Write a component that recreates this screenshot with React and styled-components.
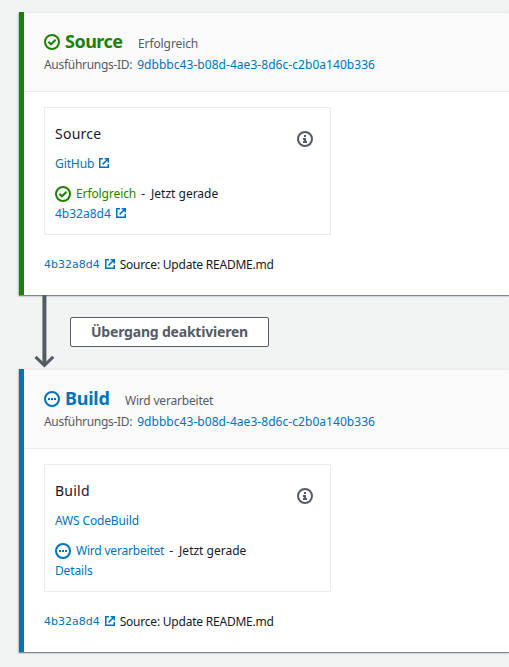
import React from 'react';
import styled, { createGlobalStyle } from 'styled-components';

const GlobalStyle = createGlobalStyle`
  * { box-sizing: border-box; }
  body {
    margin: 0;
    background: #f2f3f3;
    color: #16191f;
    font: 12px/20px "Noto Sans", "Open Sans", sans-serif;
    overflow: hidden;
  }
`;

const Page = styled.main`
  display: flex;
  flex-direction: column;
  height: 667px;
  padding: 12px 0 0 19px;
`;

const StagePanel = styled.section`
  height: 283px;
  flex: none;
  border-left: 5px solid ${(p) => p.$color};
  background: #fff;
  box-shadow: 0 1px 1px 0 rgba(0, 28, 36, 0.4), -1px 1px 2px 0 rgba(0, 28, 36, 0.2);
`;

const StageHeader = styled.header`
  height: 80px;
  padding: 17px 20px 0;
  border-top: 1px solid #eaeded;
  border-bottom: 1px solid #eaeded;
  background: #fafafa;
  color: #545b64;
`;

const TitleRow = styled.div`
  display: flex;
  align-items: baseline;
  height: 24px;
  line-height: 22px;
`;

const Title = styled.h2`
  margin: 0 0 0 5px;
  width: ${(p) => p.$width}px;
  font-size: 18px;
  font-weight: 700;
  line-height: 22px;
  letter-spacing: ${(p) => p.$spacing}px;
  color: ${(p) => p.$color};
`;

const Label = styled.span`
  letter-spacing: ${(p) => p.$spacing || 0}px;
  color: ${(p) => p.$color || 'inherit'};
  white-space: nowrap;
`;

const Separator = styled.span`
  margin-right: 1px;
`;

const Link = styled.a`
  color: #0073bb;
  letter-spacing: ${(p) => p.$spacing || 0}px;
  white-space: nowrap;
`;

const Line = styled.div`
  display: flex;
  align-items: center;
  height: 20px;
  gap: ${(p) => p.$gap || 0}px;
  margin-top: ${(p) => p.$top || 0}px;
`;

const StageBody = styled.div`
  padding: 15px 20px 0;
`;

const ActionCard = styled.article`
  width: 287px;
  height: 128px;
  padding: 16px 10px 0;
  border: 1px solid #eaeded;
`;

const CardHeader = styled.div`
  display: flex;
  justify-content: space-between;
  height: 20px;
  padding-right: 7px;
`;

const CardTitle = styled.h3`
  margin: 0;
  font-size: 14px;
  font-weight: 400;
  line-height: 20px;
  letter-spacing: 0.25px;
`;

const InfoSvg = styled.svg`
  margin-top: 7px;
  flex: none;
`;

const StatusSvg = styled.svg`
  flex: none;
  align-self: center;
`;

const ExternalSvg = styled.svg`
  flex: none;
  margin-bottom: 3px;
`;

const CommitHash = styled(Link)`
  font-family: "DejaVu Sans", sans-serif;
  font-size: 11px;
`;

const Transition = styled.div`
  display: flex;
  flex: none;
  height: 74px;
  padding-left: 15px;
`;

const ArrowSvg = styled.svg`
  flex: none;
  z-index: 1;
`;

const TransitionButton = styled.button`
  width: 199px;
  height: 30px;
  margin: 22px 0 0 16px;
  padding: 0 0 1px;
  border: 1px solid #545b64;
  border-radius: 2px;
  background: #fff;
  color: #545b64;
  font: 700 14px/20px "Noto Sans", sans-serif;
  letter-spacing: -0.2px;
`;

const StatusIcon = ({ kind, color }) => (
  <StatusSvg width="16" height="16" viewBox="0 0 16 16" fill="none" stroke={color} strokeWidth="2">
    <circle cx="8" cy="8" r="7" />
    {kind === 'done' ? (
      <path d="M4.4 7.8 7 10.3 11.6 5.7" />
    ) : (
      <path d="M4 8h2M7 8h2M10 8h2" />
    )}
  </StatusSvg>
);

const ExternalIcon = () => (
  <ExternalSvg width="10" height="10" viewBox="0 0 10 10" fill="none" stroke="#0073bb" strokeWidth="1.5">
    <path d="M4 .75H.75v8.5h8.5V6" />
    <path d="M5.6 .75h3.65V4.4M9 1 3.6 6.4" />
  </ExternalSvg>
);

const InfoIcon = () => (
  <InfoSvg width="16" height="16" viewBox="0 0 16 16" fill="none" stroke="#545b64" strokeWidth="2">
    <circle cx="8" cy="8" r="7" />
    <path d="M7 5h2M6 8h3M8 7v5M6 11h4" />
  </InfoSvg>
);

const Arrow = () => (
  <ArrowSvg width="20" height="73" viewBox="0 0 20 73" fill="none" stroke="#545b64">
    <path d="M10.4 0v70" strokeWidth="4" />
    <path d="m1.5 61.8 8.9 8.6 8.9-8.6" strokeWidth="3" />
  </ArrowSvg>
);

const stages = [
  {
    name: 'Source', kind: 'done', color: '#1d8102', status: 'Erfolgreich', statusSpacing: -0.1,
    titleWidth: 73, titleSpacing: -0.5, provider: 'GitHub', providerSpacing: -0.1,
    detail: '4b32a8d4', external: true,
  },
  {
    name: 'Build', kind: 'progress', color: '#0073bb', status: 'Wird verarbeitet', statusSpacing: -0.2,
    titleWidth: 60, titleSpacing: -0.25, provider: 'AWS CodeBuild', providerSpacing: -0.15,
    detail: 'Details', detailSpacing: -0.15, external: false,
  },
];

const Stage = ({ s }) => (
  <StagePanel $color={s.color}>
    <StageHeader>
      <TitleRow>
        <StatusIcon kind={s.kind} color={s.color} />
        <Title $color={s.color} $width={s.titleWidth} $spacing={s.titleSpacing}>{s.name}</Title>
        <Label $spacing={s.statusSpacing}>{s.status}</Label>
      </TitleRow>
      <Line $gap={5} $top={1}>
        <Label $spacing={-0.3}>Ausführungs-ID:</Label>
        <Link $spacing={0.05}>9dbbbc43-b08d-4ae3-8d6c-c2b0a140b336</Link>
      </Line>
    </StageHeader>
    <StageBody>
      <ActionCard>
        <CardHeader>
          <CardTitle>{s.name}</CardTitle>
          <InfoIcon />
        </CardHeader>
        <Line $top={10} $gap={5}>
          <Link $spacing={s.providerSpacing}>{s.provider}</Link>
          {s.external && <ExternalIcon />}
        </Line>
        <Line $top={10} $gap={5}>
          <StatusIcon kind={s.kind} color={s.color} />
          <Label $color={s.color} $spacing={s.statusSpacing}>{s.status}</Label>
          <Separator>-</Separator>
          <Label>Jetzt gerade</Label>
        </Line>
        <Line $gap={5}>
          <Link $spacing={s.detailSpacing}>{s.detail}</Link>
          {s.external && <ExternalIcon />}
        </Line>
      </ActionCard>
      <Line $top={20} $gap={5}>
        <CommitHash>4b32a8d4</CommitHash>
        <ExternalIcon />
        <Label $spacing={-0.22}>Source: Update README.md</Label>
      </Line>
    </StageBody>
  </StagePanel>
);

export default function App() {
  return (
    <>
      <GlobalStyle />
      <Page>
        <Stage s={stages[0]} />
        <Transition>
          <Arrow />
          <TransitionButton>Übergang deaktivieren</TransitionButton>
        </Transition>
        <Stage s={stages[1]} />
      </Page>
    </>
  );
}
